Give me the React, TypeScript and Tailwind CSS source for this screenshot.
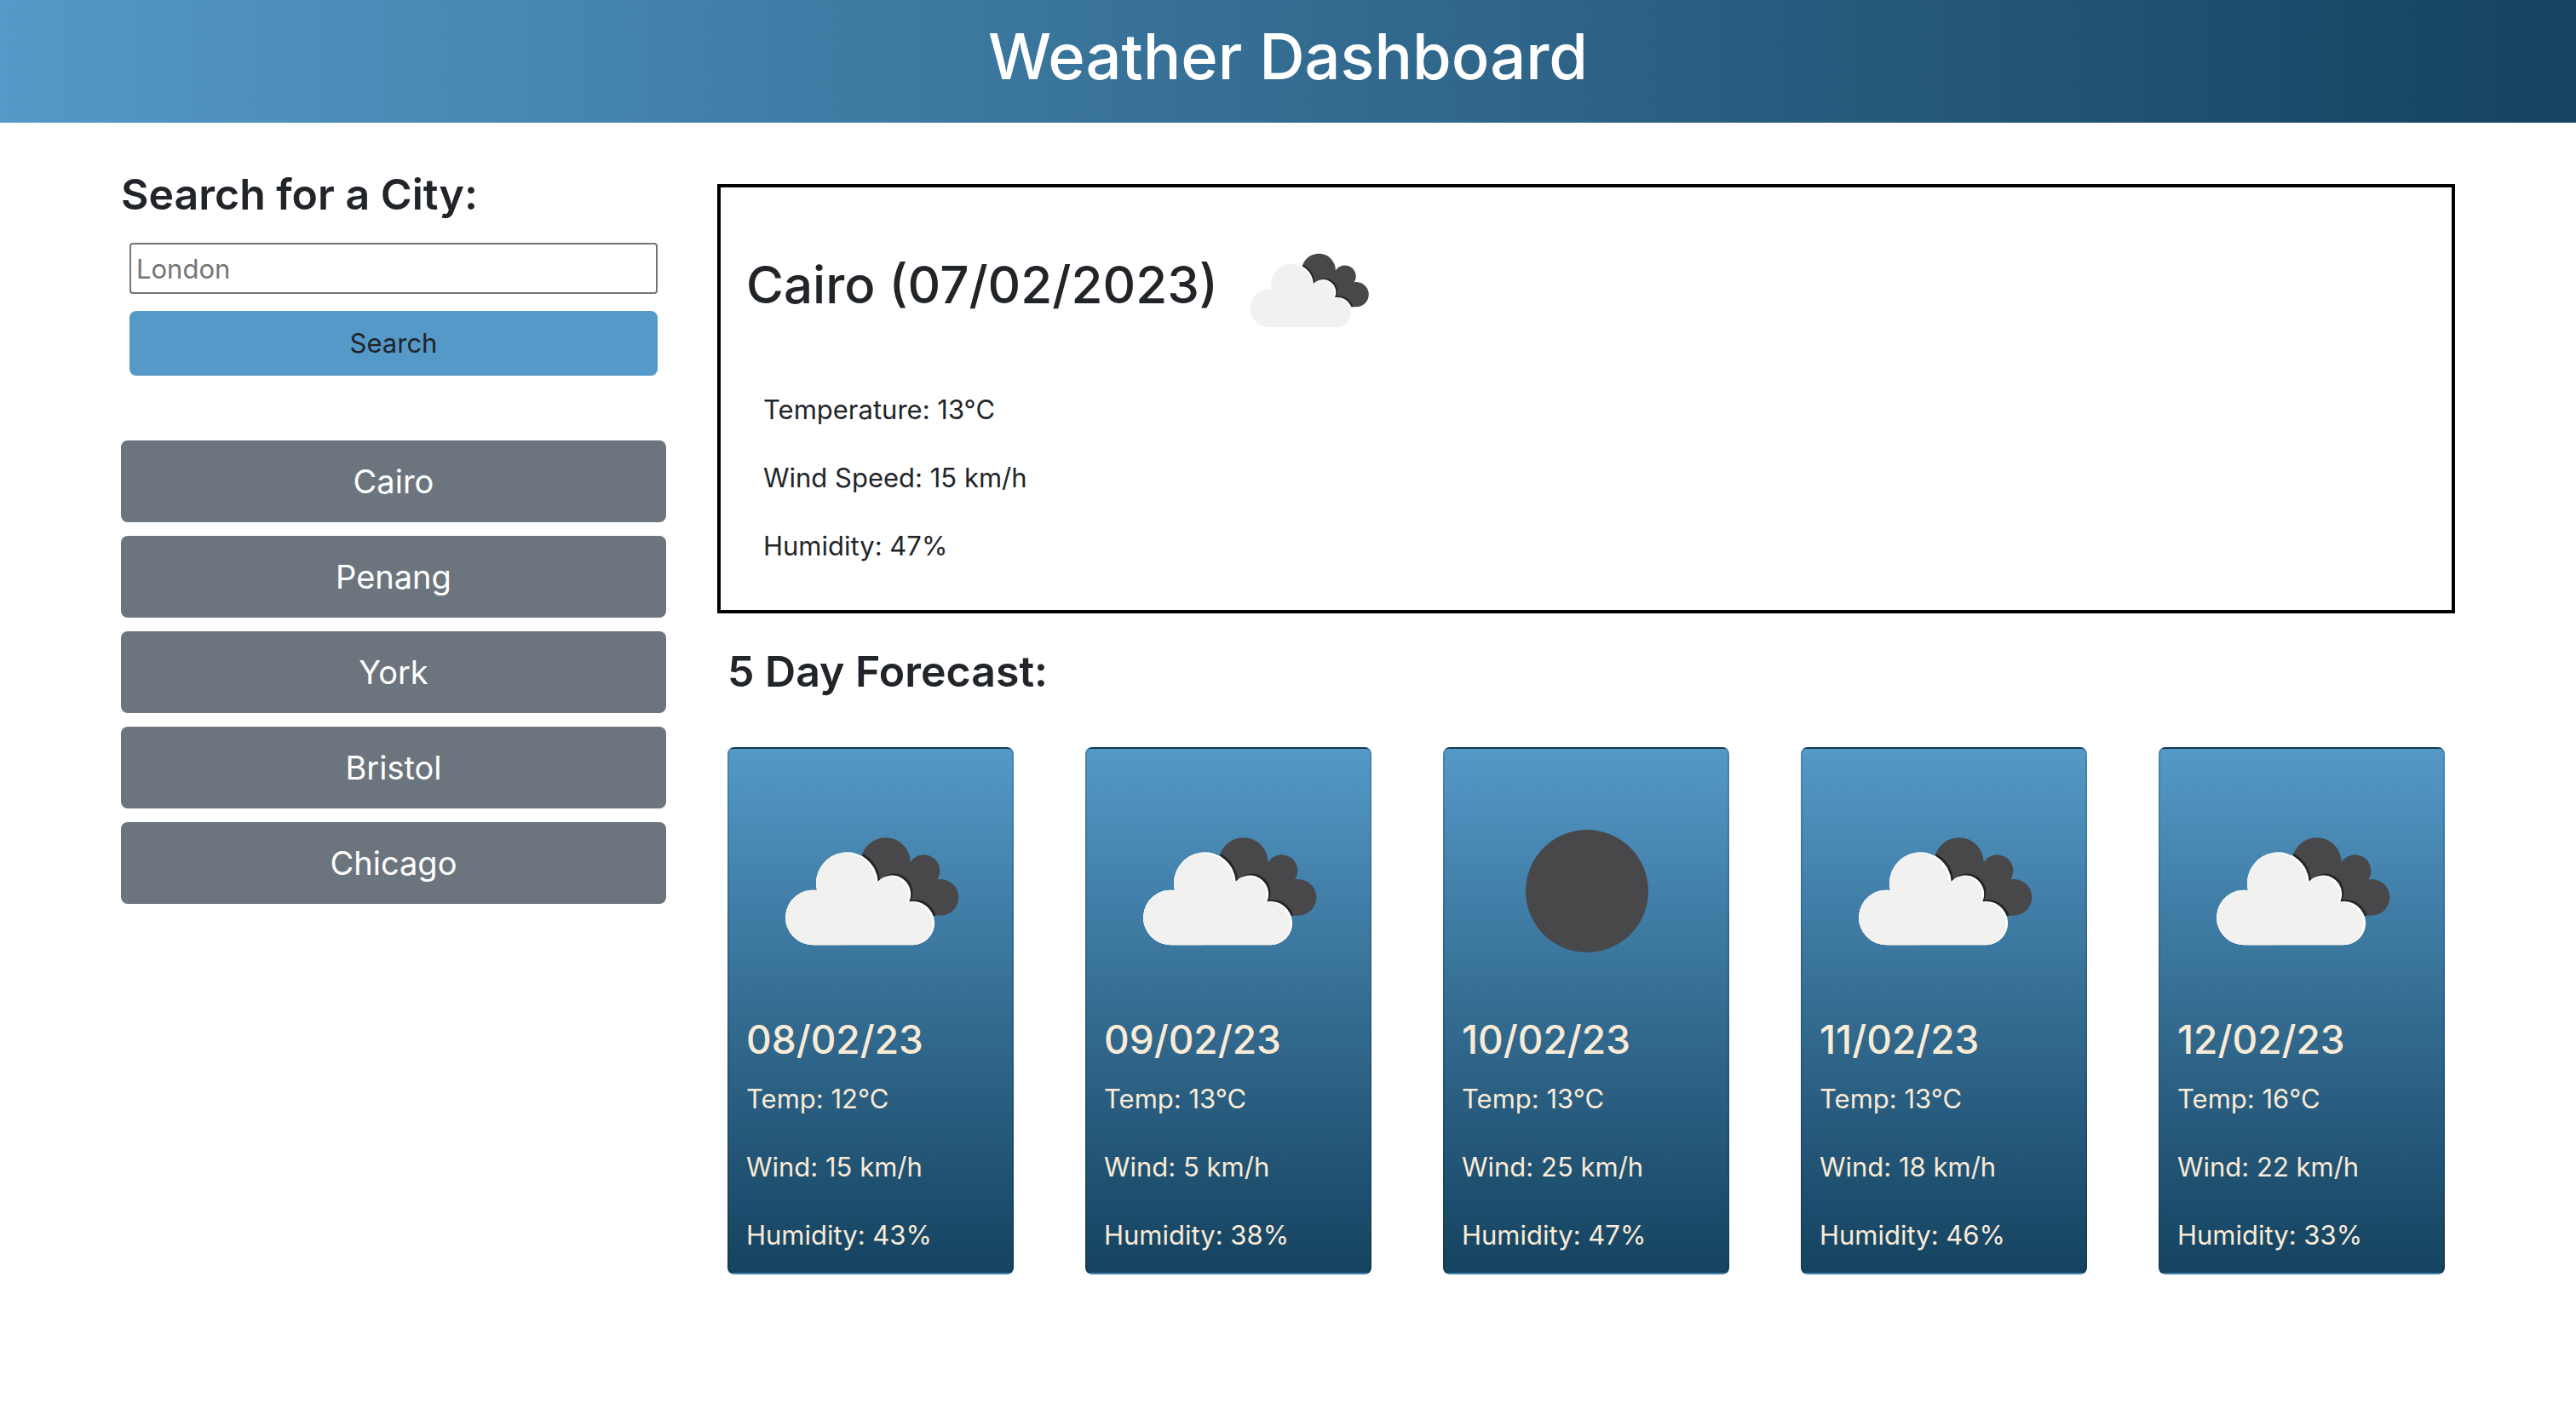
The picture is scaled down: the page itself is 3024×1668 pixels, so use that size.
import { useId } from "react";

type Icon = "clouds" | "moon";

interface Forecast {
  date: string;
  icon: Icon;
  temp: number;
  wind: number;
  humidity: number;
}

const cities = ["Cairo", "Penang", "York", "Bristol", "Chicago"];

const forecast: Forecast[] = [
  { date: "08/02/23", icon: "clouds", temp: 12, wind: 15, humidity: 43 },
  { date: "09/02/23", icon: "clouds", temp: 13, wind: 5, humidity: 38 },
  { date: "10/02/23", icon: "moon", temp: 13, wind: 25, humidity: 47 },
  { date: "11/02/23", icon: "clouds", temp: 13, wind: 18, humidity: 46 },
  { date: "12/02/23", icon: "clouds", temp: 16, wind: 22, humidity: 33 },
];

const frontCloud =
  "M135 508A97 97 0 1 1 147 315A109 109 0 1 1 362 285A66 66 0 0 1 472 355A77 77 0 1 1 483 508Z";
const backCloud =
  "M302 217A87 87 0 0 1 476 216A55 55 0 0 1 571 277A64 64 0 1 1 580 404L460 404L302 260Z";

function BrokenClouds({ className }: { className: string }) {
  const id = useId();
  return (
    <svg viewBox="0 0 292 292" className={className} role="img" aria-label="Broken clouds">
      <defs>
        <clipPath id={`${id}-back`}>
          <path d={backCloud} />
        </clipPath>
        <clipPath id={`${id}-front`}>
          <path d={frontCloud} />
        </clipPath>
      </defs>
      <g transform="translate(34 41) scale(0.3333)">
        <path d={backCloud} fill="#48484a" />
        <g clipPath={`url(#${id}-back)`}>
          <path d={frontCloud} fill="#252527" transform="translate(7 -6)" />
        </g>
        <path d={frontCloud} fill="#ffffff" />
        <g clipPath={`url(#${id}-front)`}>
          <path d={frontCloud} fill="#f1f1f0" transform="translate(-8 3)" />
          <path d="M0 160H250V540H0Z" fill="#f1f1f0" />
        </g>
      </g>
    </svg>
  );
}

function Moon({ className }: { className: string }) {
  return (
    <svg viewBox="0 0 292 292" className={className} role="img" aria-label="Clear night">
      <circle cx="147" cy="147" r="72" fill="#48484a" />
    </svg>
  );
}

function ForecastCard({ day }: { day: Forecast }) {
  return (
    <article className="rounded-lg border-2 border-black/[.125] bg-linear-to-b from-[#5499c7] to-[#154360] p-5 text-[#faebd7]">
      {day.icon === "clouds" ? (
        <BrokenClouds className="block aspect-square w-full" />
      ) : (
        <Moon className="block aspect-square w-full" />
      )}
      <h3 className="mb-[17px] text-[46px] leading-[58px] font-medium">{day.date}</h3>
      <div className="flex flex-col gap-8">
        <p>Temp: {day.temp}°C</p>
        <p>Wind: {day.wind} km/h</p>
        <p>Humidity: {day.humidity}%</p>
      </div>
    </article>
  );
}

export default function App() {
  return (
    <div className="min-h-screen bg-white pb-20 font-[Inter,sans-serif] text-[31px] leading-[48px] text-[#212529]">
      <header className="bg-linear-to-r from-[#5499c7] to-[#154360] pt-[14px] pb-[26px] text-center text-white">
        <h1 className="text-[74px] leading-[104px] font-medium">Weather Dashboard</h1>
      </header>

      <div className="mx-[142px] grid grid-cols-[640fr_2040fr] items-start gap-15 pt-12">
        <aside>
          <h2 className="text-[50px] leading-[72px] font-semibold">
            <label htmlFor="city">Search for a City:</label>
          </h2>
          <form
            className="mx-[10px] mt-[21px] flex flex-col gap-5"
            onSubmit={(event) => event.preventDefault()}
          >
            <input
              id="city"
              type="text"
              placeholder="London"
              className="h-15 w-full rounded-sm border-2 border-[#767676] bg-white px-1.5 placeholder:text-[#757575]"
            />
            <button type="submit" className="rounded-lg bg-[#5499c7] py-[14px]">
              Search
            </button>
          </form>
          <div className="mt-[76px] flex flex-col gap-4">
            {cities.map((city) => (
              <button
                key={city}
                type="button"
                className="rounded-lg bg-[#6c757d] py-6 text-[38px] text-white"
              >
                {city}
              </button>
            ))}
          </div>
        </aside>

        <main>
          <section className="mt-6 border-4 border-black px-[30px] pt-5 pb-[51px]">
            <div className="flex items-center gap-1.5">
              <h2 className="pb-3 text-[60px] leading-[72px] font-medium">Cairo (07/02/2023)</h2>
              <BrokenClouds className="size-[200px]" />
            </div>
            <div className="mt-[17px] ml-5 flex flex-col gap-8">
              <p>Temperature: 13°C</p>
              <p>Wind Speed: 15 km/h</p>
              <p>Humidity: 47%</p>
            </div>
          </section>

          <section className="px-3 pt-8">
            <h2 className="text-[50px] leading-[72px] font-semibold">5 Day Forecast:</h2>
            <div className="mt-[53px] grid grid-cols-5 gap-[84px]">
              {forecast.map((day) => (
                <ForecastCard key={day.date} day={day} />
              ))}
            </div>
          </section>
        </main>
      </div>
    </div>
  );
}
